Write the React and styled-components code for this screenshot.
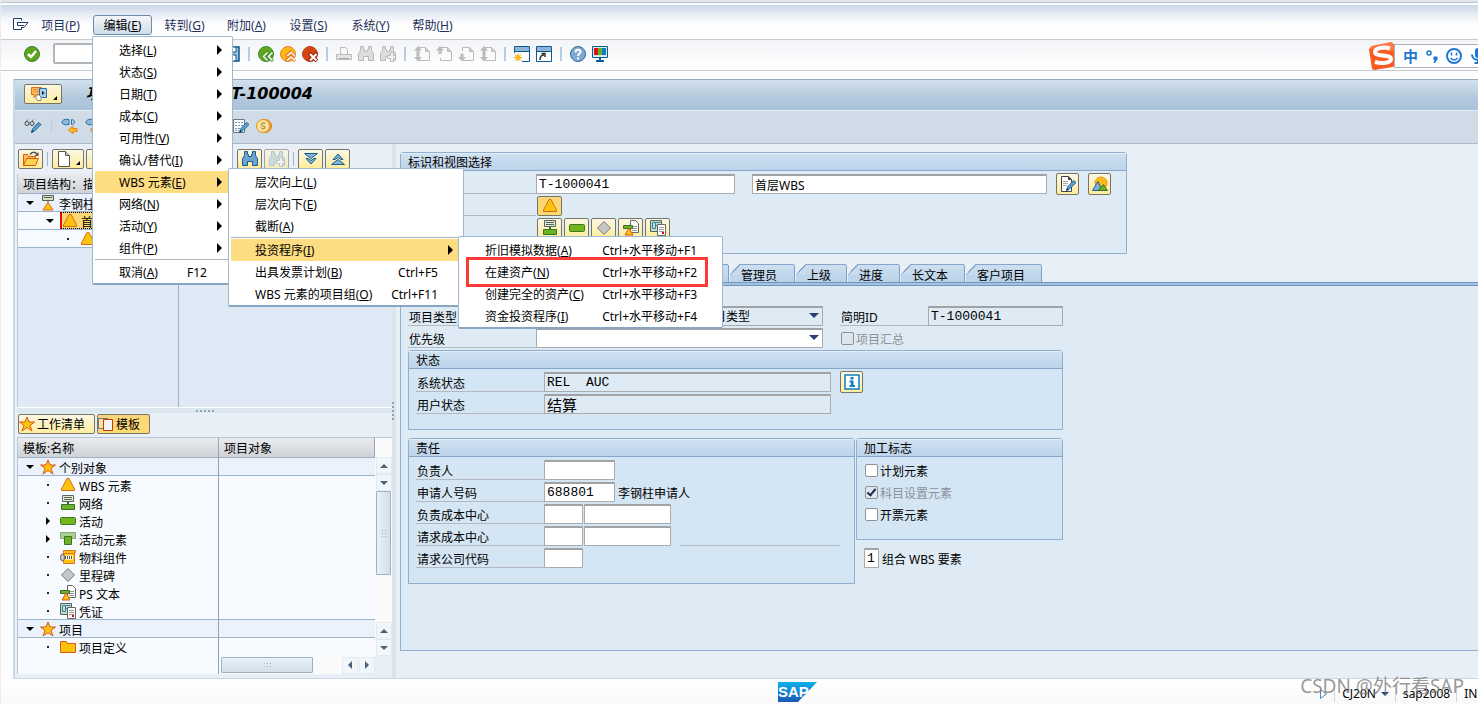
import React from 'react'
import styled, { createGlobalStyle, css } from 'styled-components'

const GlobalStyle = createGlobalStyle`
  * {
    box-sizing: border-box;
  }

  body {
    margin: 0;
    overflow: hidden;
  }

  body,
  button,
  input,
  select {
    font-family: 'Noto Sans', 'Noto Sans CJK SC', sans-serif;
    font-size: 12px;
    line-height: 18px;
    color: #000;
  }

  button {
    margin: 0;
    cursor: pointer;
  }
`

/* ---------- icons ---------- */

const Svg = styled.svg`
  display: block;
  flex: none;
`

const Icon = ({ w = 16, h = 16, children }) => (
  <Svg width={w} height={h} viewBox={`0 0 ${w} ${h}`} fill="none">
    {children}
  </Svg>
)

const ExitIcon = () => (
  <Icon>
    <path d="M8.5 3.5v-2h-8v11h8v-2" stroke="#22386e" />
    <path d="M4 5.500h11M4.500 5.500v3h4M15 5.500l-4 5M7 8.500h4M8 10.500h3" stroke="#22386e" />
  </Icon>
)

const CheckIcon = () => (
  <Icon>
    <circle cx="8" cy="8" r="7.500" fill="#5aa51c" stroke="#3c7d2c" />
    <path d="M4 8l3 3 5-6" stroke="#fff" strokeWidth="2.500" />
  </Icon>
)

const SaveIcon = () => (
  <Icon>
    <path d="M1 1h14v14H1z" fill="#9cc4e0" stroke="#0f5a8c" strokeWidth="1.500" />
    <path d="M4 1h8v5H4z" fill="#fff" stroke="#0f5a8c" />
    <path d="M4 9h8v6H4z" fill="#fff" stroke="#0f5a8c" />
  </Icon>
)

const Disc = ({ fill, stroke, children }) => (
  <Icon>
    <circle cx="8" cy="8" r="7.500" fill={fill} stroke={stroke} />
    {children}
  </Icon>
)

const BackIcon = () => (
  <Disc fill="#5fa61f" stroke="#3f8d2d">
    <path d="M10 6l-4.500 4.500L10 15M15 6l-4.500 4.500L15 15" stroke="#3f8d2d" strokeWidth="3" />
    <path d="M9.500 6.500l-4 4 4 4M14.500 6.500l-4 4 4 4" stroke="#fff" strokeWidth="1.500" />
  </Disc>
)

const UpIcon = () => (
  <Disc fill="#fdb913" stroke="#e5822a">
    <path d="M6 10.500L10.500 6l4.500 4.500M6 15l4.500-4.500L15 15" stroke="#e5722a" strokeWidth="3" />
    <path d="M7 10l4-3.500L15 10M7 14.500L11 11l4 3.500" stroke="#fff" strokeWidth="1.500" />
  </Disc>
)

const CancelIcon = () => (
  <Disc fill="#d8430f" stroke="#b5452a">
    <path d="M7 7l8 8M15 7l-8 8" stroke="#a5290f" strokeWidth="4" />
    <path d="M8 8l6.500 6.500M14.500 8L8 14.500" stroke="#fff" strokeWidth="2" />
  </Disc>
)

const PrintIcon = () => (
  <Icon>
    <path d="M4.500 8V1.500h5l2 2V8" fill="#f6f7f8" stroke="#bbb" />
    <path d="M.500 8.500h15v5H.500z" fill="#e4e4e4" stroke="#bbb" />
    <path d="M3 12.500h10" stroke="#aaa" />
  </Icon>
)

const FindIcon = ({ fill = '#ddd', stroke = '#b8b8b8', plus }) => (
  <Icon>
    <path
      d="M2.500.500h3v3h1v2h3v-2h1v-3h3v4l2 3v7h-5v-4h-5v4h-5v-7l2-3z"
      fill={fill}
      stroke={stroke}
    />
    {plus && (
      <path
        d="M10.500 6.500h3v3h2v3h-2v3h-3v-3h-3v-3h3z"
        fill="#f2f4ec"
        stroke={stroke}
      />
    )}
  </Icon>
)

const PageIcon = ({ up, down }) => (
  <Icon>
    <path d="M4.500 5V1.500h7l4 4v9h-11V12" stroke="#bbb" fill="#fafafa" />
    <path d="M11.500 1.500v4h4" fill="#ccc" stroke="#bbb" />
    {up && <path d="M4 0l4 4.500H5.500V8h-3V4.500H0z" fill="#bbb" />}
    {down && <path d="M4 15.500L0 11h2.500V7.500h3V11H8z" fill="#bbb" />}
  </Icon>
)

const SessionIcon = ({ link }) => (
  <Icon>
    <path d="M.500.500h15v15H.500z" fill="#fff" stroke="#0a5c8f" />
    <path d="M1 1h14v4H1z" fill="#8fb4dc" />
    <path d="M1 5.500h14" stroke="#0a5c8f" />
    {link ? (
      <path d="M4 14c0-3 1-5 4-5M5.500 7.500h3.500v3.500" stroke="#333" strokeWidth="1.500" />
    ) : (
      <g>
        <path d="M0 7h8v9H0z" fill="#fff" />
        <path d="M4 7.500v8M0 11.500h8M1 8.500l6 6M7 8.500l-6 6" stroke="#f28a1a" />
        <circle cx="4" cy="11.500" r="2.500" fill="#fdb913" />
      </g>
    )}
  </Icon>
)

const HelpIcon = () => (
  <Icon>
    <circle cx="8" cy="8" r="7.500" fill="#7fa9d2" stroke="#2f6c9e" />
    <path d="M5.500 6.500C5.500 3 10.500 3 10.500 6c0 1.500-2.500 1.500-2.500 4" stroke="#fff" strokeWidth="2" />
    <path d="M7 11.500h2v2H7z" fill="#fff" />
  </Icon>
)

const MonitorIcon = () => (
  <Icon>
    <path d="M.500.500h15v11H.500z" fill="#dceaf4" stroke="#0a5c8f" />
    <path d="M2 2h4v7H2z" fill="#d8130f" />
    <path d="M6 2h4v7H6z" fill="#6ab023" />
    <path d="M10 2h4v7h-4z" fill="#0d7fc4" />
    <path d="M7 12h2v2h3v2H4v-2h3z" fill="#0a5c8f" />
  </Icon>
)

const MenuFlagIcon = () => (
  <Icon w={18}>
    <path d="M1.500 1.500h10v7h-5l-2.500 3v-3h-2.500z" fill="#fdb95b" stroke="#d9711a" />
    <path d="M3.500 3.500h6M3.500 5.500h6" stroke="#d9711a" strokeDasharray="1 1" />
    <path d="M9.500 2.500h7v9h-7z" fill="#a9d0ea" stroke="#2a6f9f" />
    <path d="M12 5l2.500 2L12 9z" fill="#111" />
    <path d="M5.500 11l3-2.500 2.500 2.500v3.500h-3.500z" fill="#fff" stroke="#888" />
  </Icon>
)

const PencilPath = () => (
  <g>
    <path d="M6.500 14.500l1-3.500 6-6.500 2.500 2-6.500 6.500z" fill="#5ea3d0" stroke="#1e618f" />
    <path d="M6 15l3-1.500L7.500 12z" fill="#133f5f" />
  </g>
)

const GlassesIcon = () => (
  <Icon w={18}>
    <circle cx="3" cy="5.500" r="2" stroke="#444" />
    <circle cx="8" cy="5.500" r="2" stroke="#444" />
    <path d="M1.500 4L4 1.500M7 4l2.500-2.500" stroke="#777" />
    <g transform="translate(1 0)">
      <PencilPath />
    </g>
  </Icon>
)

const MoveIcon = ({ right }) => (
  <Icon w={17}>
    <path d="M1 3.500C3 1 5 1 8 1.500v5C5 7 3 7 1 5z" fill="#8fb9dc" stroke="#2a6f9f" />
    <path d="M10.500 1.500c4 0 4 5 0 5z" fill="#b4d2ea" stroke="#2a6f9f" />
    {right ? (
      <path d="M15 12l-5-4v2.500H6v3h4V16z" fill="#fdc04c" stroke="#e5822a" />
    ) : (
      <path d="M7.500 12l4.500-4v2.500h4v3h-4V16z" fill="#fdb913" stroke="#e5822a" />
    )}
  </Icon>
)

const SheetPencilIcon = () => (
  <Icon>
    <path d="M.500 1.500h11v13H.500z" fill="#f7fafc" stroke="#777" />
    <path d="M2 4.500h8M2 7.500h8M2 10.500h6M2 12.500h4" stroke="#8295a6" strokeDasharray="2 1" />
    <PencilPath />
  </Icon>
)

const CoinIcon = () => (
  <Icon>
    <circle cx="9" cy="8" r="6.500" fill="#f3a044" stroke="#e07f1a" />
    <circle cx="7" cy="8" r="6.500" fill="#fbe39b" stroke="#e8921c" />
    <path d="M9.500 6C8 4 5 5 5.500 7c.500 1.500 3.500.500 3.500 2.500 0 1.500-3 2-4 0" stroke="#8a6a2a" />
  </Icon>
)

const OpenIcon = () => (
  <Icon w={18}>
    <path d="M1.500 14.500v-11h4l1 2h7v3" fill="#fdc04c" stroke="#d9591a" />
    <path d="M1.500 14.500l3-7h12l-3 7z" fill="#fdd24c" stroke="#d9591a" />
    <path d="M8 3.500C10 .500 13 .500 15 3" stroke="#555" strokeWidth="1.500" />
    <path d="M16.500 1v4h-4z" fill="#555" />
  </Icon>
)

const NewIcon = () => (
  <Icon w={14}>
    <path d="M1.500.500h7l4 4v11h-11z" fill="#fff" stroke="#555" />
    <path d="M8.500.500v4h4" fill="#ccc" stroke="#555" />
  </Icon>
)

const ExpandIcon = ({ up }) => (
  <Icon>
    <g transform={up ? 'rotate(180 8 8)' : undefined}>
      <path d="M1.500 2.500h13L8 7.500z" fill="#85b3dc" stroke="#15608f" />
      <path d="M3 7.500h2l3 2 3-2h2L8 13z" fill="#85b3dc" stroke="#15608f" />
    </g>
  </Icon>
)

const WbsIcon = () => (
  <Icon>
    <path
      d="M7 1.500h2l5.500 10.500v1.500h-13V12z"
      fill="#fdc40f"
      stroke="#d9691a"
      strokeLinejoin="round"
    />
  </Icon>
)

const ProjectIcon = () => (
  <Icon>
    <path d="M2.500.500h11v5h-11z" fill="#d9e0c4" stroke="#555f55" />
    <path d="M4 2.500h8M8 6v2" stroke="#555f55" />
    <path d="M8 7.500l5 7.500H3z" fill="#fdc40f" stroke="#d9691a" strokeLinejoin="round" />
  </Icon>
)

const NetworkIcon = () => (
  <Icon>
    <path d="M2.500.500h11v6h-11z" fill="#e4ead4" stroke="#56655a" />
    <path d="M4 2.500h8M4 4.500h8" stroke="#56655a" />
    <path d="M1.500 9.500h13v5h-13z" fill="#6cb320" stroke="#39702f" />
    <path d="M7 7h2v2H7z" fill="#39702f" />
  </Icon>
)

const ActivityIcon = () => (
  <Icon>
    <rect x=".500" y="4.500" width="15" height="7" rx="1" fill="#74b51c" stroke="#3f7a2a" />
  </Icon>
)

const ElementIcon = () => (
  <Icon>
    <path d="M.500 1.500h15v6h-15z" fill="#a9d08f" stroke="#8aa77e" />
    <path d="M4.500 5.500h7v8h-7z" fill="#6cb320" stroke="#39702f" />
  </Icon>
)

const MaterialIcon = () => (
  <Icon>
    <path d="M3.500 1.500h12v2h-1v11h-11z" fill="#fdc40f" stroke="#e5722a" />
    <path d="M3 4.500h11" stroke="#e5722a" />
    <ellipse cx="2.500" cy="8.500" rx="2" ry="3.500" fill="#ccc" stroke="#666" />
    <path d="M5 8.500h8" stroke="#fff" strokeWidth="4" />
    <path d="M5 8.500h7" stroke="#555" strokeWidth="3" strokeDasharray="1 1" />
  </Icon>
)

const MilestoneIcon = () => (
  <Icon>
    <path d="M8 1.500L14.500 8 8 14.500 1.500 8z" fill="#c6c6c6" stroke="#777" />
  </Icon>
)

const PsTextIcon = () => (
  <Icon>
    <path d="M7.500.500h5l3 3v9h-8z" fill="#fff" stroke="#666" />
    <path d="M9 6.500h5M9 8.500h5M9 10.500h5" stroke="#999" />
    <path d="M.500 5.500h9v3h-9z" fill="#6cb320" stroke="#39702f" />
    <path d="M6 8l4 7H2z" fill="#fdc40f" stroke="#d9591a" strokeLinejoin="round" />
  </Icon>
)

const DocumentIcon = () => (
  <Icon>
    <path d="M.500.500h11v11h-11z" fill="#c3dfc5" stroke="#56655a" />
    <path d="M2.500 2.500h3v6h-3zM5.500 2.500h5M5.500 5.500h3" stroke="#3780a8" />
    <path d="M7.500 4.500h8v11h-8z" fill="#fff" stroke="#666" />
    <path d="M9 7.500h5M9 9.500h5M9 11.500h5" stroke="#999" />
    <path d="M12 12h2v2h-2z" fill="#e2001a" />
  </Icon>
)

const FolderIcon = () => (
  <Icon>
    <path d="M.500 2.500h6l1 2h8v9h-15z" fill="#fdc40f" stroke="#d9591a" />
  </Icon>
)

const StarIcon = () => (
  <Icon>
    <path
      d="M8 1l2 5h5.500L11 9.500l2 5.500-5-3.500L3 15l2-5.500L.500 6H6z"
      fill="#fdc40f"
      stroke="#d9591a"
    />
  </Icon>
)

const TemplateIcon = () => (
  <Icon>
    <path d="M.500 2.500h9v10h-9z" fill="#fde7a0" stroke="#777" />
    <path d="M5.500 3.500h9v11h-9z" fill="#f4f4f4" stroke="#c9340f" />
  </Icon>
)

const NoteIcon = () => (
  <Icon>
    <path d="M1.500.500h7l3 3v12h-10z" fill="#fff" stroke="#444" />
    <path d="M8.500.500v3h3" fill="#444" stroke="#444" />
    <path d="M3 5.500h5M3 7.500h5M3 9.500h4" stroke="#aaa" />
    <PencilPath />
  </Icon>
)

const HillsIcon = () => (
  <Icon>
    <circle cx="9" cy="7" r="6" fill="#fdb913" stroke="#f0941a" />
    <path d="M.500 14.500L6 5.500l4 9z" fill="#7fb3dc" stroke="#1e618f" />
    <path d="M6 14.500l5.500-6 4 6z" fill="#6cb320" stroke="#39702f" />
  </Icon>
)

const InfoIcon = () => (
  <Icon>
    <path d="M1 1h14v14H1z" fill="#fff" stroke="#0d7fc4" strokeWidth="1.500" />
    <path d="M6.500 3h3v2.500h-3zM5.500 6.500h4V11H11v2H5.500v-2H7V8.500H5.500z" fill="#0d7fc4" />
  </Icon>
)

const SogouIcon = () => (
  <Icon w={28} h={28}>
    <path d="M2 5L22 1l3 1 3 18-4 5-19 3-2-1L0 7z" fill="#fb5a20" />
    <path d="M1 7l1-3 20-4 2 1 1 8z" fill="#ff7a48" />
    <path
      d="M21 6.500C15 4.500 6 6 6 10c0 5 16 2 16 7 0 4-9 5-16 3"
      stroke="#fff"
      strokeWidth="4"
    />
  </Icon>
)

const SmileIcon = () => (
  <Icon>
    <circle cx="8" cy="8" r="7" stroke="#1f78cf" strokeWidth="2" />
    <path d="M5.500 4.500v3M10.500 4.500v3M4.500 10c2 2.500 5 2.500 7 0" stroke="#1f78cf" strokeWidth="1.500" />
  </Icon>
)

const MicIcon = () => (
  <Icon>
    <rect x="5" y="0" width="6" height="10" rx="3" fill="#1f78cf" />
    <path d="M2 6.500c0 7 12 7 12 0M8 12v4M4.500 15h7" stroke="#1f78cf" strokeWidth="2" />
  </Icon>
)

const PunctuationIcon = () => (
  <Icon w={12}>
    <circle cx="3" cy="5" r="2" stroke="#1f78cf" strokeWidth="1.500" />
    <path d="M7.500 8.500h4v3L9 15H7.500l1-3h-1z" fill="#1f78cf" />
  </Icon>
)

const SapLogo = () => (
  <Svg width="39" height="20" viewBox="0 0 39 20">
    <defs>
      <linearGradient id="sap" x1="0" y1="0" x2="0" y2="1">
        <stop offset="0" stopColor="#0fb0ec" />
        <stop offset="1" stopColor="#1a58b4" />
      </linearGradient>
    </defs>
    <path d="M0 0h39L20 20H0z" fill="url(#sap)" />
    <text
      x="0"
      y="15"
      fill="#fff"
      fontFamily="Liberation Sans, sans-serif"
      fontSize="15"
      fontWeight="700"
    >
      SAP
    </text>
  </Svg>
)

/* ---------- window ---------- */

const Window = styled.div`
  background: #fdfdfd;
  border-left: 1px solid #ececec;
  display: flex;
  flex-direction: column;
  height: 100vh;
  overflow: hidden;
  position: relative;
`

const TopEdge = styled.div`
  background: #e2e4e6;
  border-bottom: 1px solid #b4c3d6;
  flex: none;
  height: 3px;
`

const MenuBar = styled.nav`
  align-items: center;
  background: linear-gradient(#cbd6e9, #f2f5fa 40%, #fff 60%);
  border-bottom: 1px solid #c8cccf;
  border-top: 2px solid #fff;
  display: flex;
  flex: none;
  gap: 3px;
  height: 37px;
  padding: 6px 0 0 12px;
`

const MenuSlot = styled.div`
  position: relative;

  &:first-of-type {
    margin-left: -1px;
  }
`

const MenuTitle = styled.button`
  background: ${p => (p.$open ? 'linear-gradient(#f4f7fb, #cfdcea)' : 'none')};
  border: 1px solid ${p => (p.$open ? '#6f8aa8' : 'transparent')};
  border-radius: 3px;
  color: ${p => (p.$open ? '#000' : '#1d3058')};
  height: 20px;
  line-height: 16px;
  padding: 2px 0 0;
  white-space: nowrap;
  width: 59px;
`

const Menu = styled.div`
  background: #fff;
  border: 1px solid #9fb8d2;
  border-bottom: 2px solid #88a5c4;
  border-radius: 2px;
  left: ${p => p.$left};
  padding: 2px 3px 0 2px;
  position: absolute;
  top: ${p => p.$top};
  width: ${p => p.$width};
  z-index: 5;
`

const MenuEntry = styled.div`
  position: relative;
`

const MenuItem = styled.button`
  align-items: center;
  background: ${p => (p.$active ? '#fddc82' : 'none')};
  border: 0;
  display: flex;
  gap: 4px;
  height: 22px;
  justify-content: space-between;
  padding: 2px 22px 0 24px;
  white-space: nowrap;
  width: 100%;

  ${p =>
    p.$arrow &&
    css`
      padding-right: 7px;

      &::after {
        border: 5px solid transparent;
        border-left-color: #000;
        border-right: 0;
        content: '';
        margin-bottom: 3px;
      }
    `}
`

const MenuRule = styled.hr`
  border: 0;
  border-top: 1px solid #a6b2be;
  margin: 0 0 1px;
`

const Highlight = styled.div`
  border: 3px solid #fd3a3a;
  height: 30px;
  left: 7px;
  pointer-events: none;
  position: absolute;
  top: 20px;
  width: 242px;
`

const Toolbar = styled.div`
  align-items: center;
  background: linear-gradient(#f2f4f7, #fff);
  border-bottom: 1px solid #c5c9ce;
  display: flex;
  flex: none;
  gap: 6px;
  height: 31px;
  padding: 0 0 3px 23px;
`

const IconButton = styled.button`
  background: none;
  border: 0;
  flex: none;
  padding: 0;
`

const Separator = styled.span`
  background: ${p => p.$color || '#b8cbe4'};
  flex: none;
  height: 14px;
  margin: 0 2px;
  width: ${p => p.$width || 2}px;
`

const CommandField = styled.input`
  background: #fff;
  border: 2px solid #b4b6b8;
  border-radius: 2px;
  height: 21px;
  margin-left: 7px;
  padding: 0 4px;
  width: 165px;
`

const ImeBar = styled.div`
  align-items: center;
  display: flex;
  height: 28px;
  overflow: hidden;
  position: absolute;
  right: 0;
  top: 42px;
  width: 109px;
`

const ImeKeys = styled.div`
  align-items: center;
  background: #fff;
  border: 1px solid #abb0ba;
  border-right: 0;
  color: #1f78cf;
  display: flex;
  flex: none;
  font-size: 15px;
  font-weight: 700;
  gap: 8px;
  height: 24px;
  margin-left: -3px;
  padding-left: 8px;
`

const Frame = styled.div`
  background: #e8eff7;
  border-bottom: 1px solid #ccd5e2;
  border-left: 2px solid #ccd7e6;
  border-top: 1px solid #9aabc4;
  display: flex;
  flex: 1;
  flex-direction: column;
  margin: 8px 0 0 12px;
  min-height: 0;
`

const TitleBar = styled.header`
  align-items: center;
  background: linear-gradient(#d3e1ef, #bdd1df 40%, #b2c8de 60%, #a9c1da);
  border-bottom: 1px solid #e6eef5;
  display: flex;
  flex: none;
  gap: 24px;
  height: 31px;
  padding: 0 0 3px 9px;
`

const Title = styled.h1`
  font-family: 'DejaVu Sans', 'Noto Sans CJK SC', sans-serif;
  font-size: 16px;
  font-style: italic;
  font-weight: 700;
  line-height: 20px;
  margin: 0;
  white-space: pre;
`

const TitleText = styled.span`
  display: inline-block;
  width: 145px;
`

const AppToolbar = styled.div`
  align-items: center;
  background: #cfdce7;
  border-bottom: 1px solid #a9b9c9;
  display: flex;
  flex: none;
  gap: 7px;
  height: 33px;
  padding: 0 0 3px 9px;
`

const Grow = styled.span`
  flex: none;
  width: ${p => p.$width}px;
`

const SapButton = styled.button`
  align-items: center;
  background: ${p =>
    p.$pressed
      ? 'linear-gradient(#fbd57a, #fddb70)'
      : 'linear-gradient(#fbf7e4, #ffec9c)'};
  border: 1px solid #77756a;
  border-radius: 2px;
  display: flex;
  flex: none;
  gap: 2px;
  height: ${p => p.$height || 20}px;
  justify-content: center;
  opacity: ${p => (p.$dim ? 0.6 : 1)};
  padding: ${p => (p.$text ? '0 9px 0 0' : '0')};
  white-space: nowrap;
  width: ${p => (p.$width ? `${p.$width}px` : 'auto')};

  span {
    padding-top: ${p => (p.$text ? 2 : 0)}px;
  }
`

const Corner = styled.span`
  align-self: flex-end;
  border: 2px solid #000;
  border-left-color: transparent;
  border-top-color: transparent;
  margin: 0 0 3px 3px;
`

const Main = styled.main`
  display: flex;
  flex: 1;
  min-height: 0;
`

/* ---------- navigation pane ---------- */

const Pane = styled.aside`
  display: flex;
  flex: none;
  flex-direction: column;
  padding: 0 0 4px 2px;
  width: 377px;
`

const ToolStrip = styled.div`
  align-items: center;
  display: flex;
  flex: none;
  gap: 2px;
  padding: 5px 0 0 1px;
`

const ViewBar = styled.div`
  display: flex;
  flex: none;
  gap: 2px;
  padding: 1px 0 0 1px;
`

const TreeArea = styled.div`
  background: linear-gradient(#9fb2c8, #9fb2c8) 160px 0 / 1px 100% no-repeat
    #e0eaf6;
  border-left: 1px solid #b7c6d6;
  flex: 1;
  margin-top: 5px;
  min-height: 0;
`

const Table = styled.table`
  border-collapse: separate;
  border-spacing: 0;
  table-layout: fixed;
  width: 100%;
`

const HeadCell = styled.th`
  background: linear-gradient(#e9ebee, #cfd3d8);
  border-bottom: 1px solid #9db0c8;
  border-right: 1px solid #9aa6b2;
  font-weight: 400;
  height: 19px;
  line-height: 16px;
  overflow: hidden;
  padding: 3px 0 0 5px;
  text-align: left;
  white-space: nowrap;
  width: ${p => p.$width};
`

const Cell = styled.td`
  background: ${p => (p.$group ? '#ebf2fb' : '#f7fafe')};
  border-bottom: ${p => (p.$line ? '1px solid #9db4cd' : '0')};
  border-right: ${p => (p.$last ? '0' : '1px solid #8ea3ba')};
  height: 18px;
  overflow: hidden;
  padding: 0;
  vertical-align: top;
`

const Node = styled.div`
  align-items: center;
  display: flex;
  height: 17px;
  line-height: 17px;
  padding-left: ${p => 6 + p.$level * 20}px;
  white-space: nowrap;
`

const NodeLabel = styled.span`
  align-items: center;
  display: flex;
  gap: 3px;

  span {
    padding-top: 3px;
  }

  ${p =>
    p.$selected &&
    css`
      background: #fcd778;
      border: 1px dotted #000;
      border-left: 2px solid #f00;
      height: 17px;
      padding-right: 60px;
    `}
`

const Marker = styled.span`
  flex: none;
  width: 16px;

  &::before {
    content: '';
    display: block;
    margin-left: 2px;

    ${p =>
      p.$kind === 'open' &&
      css`
        border: 4px solid transparent;
        border-bottom: 0;
        border-top-color: #000;
        width: 0;
      `}

    ${p =>
      p.$kind === 'closed' &&
      css`
        border: 4px solid transparent;
        border-left-color: #000;
        border-right: 0;
        width: 0;
      `}

    ${p =>
      p.$kind === 'leaf' &&
      css`
        background: #222;
        height: 2px;
        margin-left: 3px;
        width: 2px;
      `}
  }
`

const Splitter = styled.div`
  align-items: center;
  background: #dde7ef;
  border-top: 1px solid #fff;
  display: flex;
  flex: none;
  height: 6px;
  justify-content: center;

  &::after {
    border-top: 2px dotted #8fa3b8;
    content: '';
    width: 18px;
  }
`

const VerticalSplitter = styled.div`
  align-items: center;
  background: #dbe5ec;
  display: flex;
  flex: none;
  width: 4px;

  &::after {
    border-left: 2px dotted #8fa3b8;
    content: '';
    height: 18px;
  }
`

const TemplateArea = styled.div`
  border-left: 1px solid #b7c6d6;
  border-top: 1px solid #b7c6d6;
  display: grid;
  flex: none;
  grid-template-columns: 357px 17px;
  grid-template-rows: auto 18px;
  margin-top: 3px;
`

const ScrollColumn = styled.div`
  background: #fafafa;
  display: flex;
  flex-direction: column;
  padding: 19px 0 0 1px;
`

const ScrollButton = styled.button`
  align-items: center;
  background: #f1f6fa;
  border: 1px solid #e3eaf0;
  display: flex;
  flex: none;
  height: 17px;
  justify-content: center;
  padding: 0;
  width: 16px;

  &::after {
    border: 4px solid transparent;
    content: '';
    ${p => p.$dir === 'up' && 'border-top: 0; border-bottom-color: #48617a;'}
    ${p => p.$dir === 'down' && 'border-bottom: 0; border-top-color: #48617a;'}
    ${p => p.$dir === 'left' && 'border-left: 0; border-right-color: #48617a;'}
    ${p => p.$dir === 'right' && 'border-right: 0; border-left-color: #48617a;'}
  }
`

const Thumb = styled.div`
  align-items: center;
  background: linear-gradient(
    ${p => (p.$vertical ? '90deg' : '180deg')},
    #e9f1f8,
    #d2dfe9
  );
  border: 1px solid #9fb2c4;
  border-radius: 1px;
  display: flex;
  flex: none;
  height: ${p => (p.$vertical ? '84px' : '16px')};
  justify-content: center;
  width: ${p => (p.$vertical ? '15px' : '92px')};

  &::after {
    background: radial-gradient(#9fb2c4 1px, transparent 1px) 0 0 / 3px 3px;
    content: '';
    height: ${p => (p.$vertical ? '9px' : '6px')};
    width: ${p => (p.$vertical ? '6px' : '9px')};
  }
`

const ScrollTrack = styled.div`
  flex: 1;
`

const ScrollRow = styled.div`
  align-items: center;
  background: linear-gradient(90deg, #f7fafe 200px, #8ea3ba 200px, #8ea3ba 201px, #fafafa 201px);
  display: flex;
  gap: 1px;
  padding-left: 203px;
`

/* ---------- detail area ---------- */

const Detail = styled.section`
  display: flex;
  flex: 1;
  flex-direction: column;
  min-width: 0;
  padding: 8px 0 27px 4px;
`

const Group = styled.section`
  background: ${p => p.$bg || '#d4e5f3'};
  border: 1px solid #8fafd0;
  border-radius: 3px 3px 0 0;
  height: ${p => p.$height}px;
  width: ${p => p.$width}px;
`

const GroupTitle = styled.h2`
  background: linear-gradient(#d0e0f0, #bcd3ea);
  border-bottom: 1px solid #86a7cb;
  border-top: 1px solid #e4eef8;
  font-size: 12px;
  font-weight: 400;
  height: 18px;
  line-height: 17px;
  margin: 0 0 3px;
  padding-left: 7px;
`

const Row = styled.div`
  align-items: center;
  display: flex;
  gap: ${p => p.$gap || 0}px;
  height: 20px;
  margin-bottom: 2px;
  padding-left: ${p => p.$indent || 0}px;
`

const Label = styled.label`
  align-self: stretch;
  border-bottom: 1px solid #b3b9bf;
  flex: none;
  line-height: 22px;
  padding: 1px 0 0 1px;
  white-space: nowrap;
  width: ${p => p.$width || 128}px;
`

const Text = styled.span`
  padding: 3px 0 0 3px;
  white-space: nowrap;
`

const Rule = styled.span`
  align-self: flex-end;
  border-bottom: 1px solid #b3b9bf;
  margin-left: 9px;
  width: 160px;
`

const fieldStyle = css`
  background: ${p => (p.$locked ? '#dfebf4' : '#fff')};
  border: 1px solid #a9abad;
  border-radius: 1px;
  border-top: 2px solid #a0a2a4;
  flex: none;
  height: 20px;
  margin: 0;
  padding: 0 2px;
  width: ${p => p.$width}px;
`

const Field = styled.input`
  ${fieldStyle}
  font-family: ${p =>
    p.$ui
      ? "'Noto Sans', 'Noto Sans CJK SC', sans-serif"
      : "'Liberation Mono', 'Noto Sans CJK SC', monospace"};
  font-size: ${p => (p.$ui ? 12 : p.$large ? 15 : 13)}px;
`

const SelectBox = styled.span`
  flex: none;
  position: relative;

  &::after {
    border: 5px solid transparent;
    border-bottom: 0;
    border-top-color: #26406f;
    content: '';
    pointer-events: none;
    position: absolute;
    right: 4px;
    top: 7px;
  }
`

const Select = styled.select`
  ${fieldStyle}
  appearance: none;
  display: block;
  padding-left: ${p => p.$indent || 2}px;
`

const Check = styled.label`
  align-items: center;
  color: ${p => (p.$muted ? '#8a9299' : '#000')};
  display: flex;
  gap: 2px;
  white-space: nowrap;

  span {
    padding-top: 3px;
  }
`

const CheckBox = styled.input`
  appearance: none;
  background: ${p => (p.disabled ? '#dbe6ef' : '#fff')};
  border: 1px solid #8f9193;
  border-radius: 2px;
  flex: none;
  height: 13px;
  margin: 0;
  width: 13px;

  &:checked::after {
    border: solid #1f2e52;
    border-width: 0 2px 2px 0;
    box-sizing: border-box;
    content: '';
    display: block;
    height: 9px;
    margin-left: 3px;
    transform: rotate(40deg);
    width: 5px;
  }
`

const TabList = styled.div`
  display: flex;
  flex: none;
  height: 28px;
  padding-top: 10px;
`

const Tab = styled.button`
  background: linear-gradient(#cfe0f0, #b9d1e9) 10px 0 no-repeat;
  border: 0;
  border-right: 1px solid #7f9fc4;
  border-radius: 0 3px 0 0;
  display: flex;
  height: 18px;
  line-height: 18px;
  margin-right: 1px;
  padding: 0;
  text-align: left;
  white-space: nowrap;
  width: ${p => p.$width}px;

  &::before {
    background: linear-gradient(
          to bottom right,
          transparent 46%,
          #86a7cb 47%,
          #86a7cb 54%,
          #c9dcee 55%
        )
        0 0 / 10px 11px no-repeat,
      linear-gradient(#bfd5eb, #bfd5eb) 0 11px no-repeat;
    content: '';
    flex: none;
    height: 18px;
    width: 10px;
  }

  span {
    border-top: 1px solid #86a7cb;
    flex: 1;
    height: 18px;
    line-height: 22px;
    padding-left: 1px;
  }
`

const TabPage = styled.div`
  background: #dfebf4;
  border-bottom: 1px solid #8fb3d6;
  border-left: 1px solid #8fb3d6;
  flex: 1;
  min-height: 0;
  padding: 20px 0 0 7px;
`

const TabLine = styled.div`
  background: #a6c1e0;
  border-bottom: 1px solid #7097c3;
  border-top: 1px solid #7097c3;
  flex: none;
  height: 4px;
`

const Columns = styled.div`
  align-items: flex-start;
  display: flex;
  gap: 1px;
  margin-top: 8px;
`

const StatusBar = styled.footer`
  align-items: center;
  background: linear-gradient(#fff, #f9f9f9);
  display: flex;
  flex: none;
  height: 25px;
  justify-content: space-between;
  overflow: hidden;
  padding-left: 52.600%;
`

const StatusItems = styled.div`
  align-items: center;
  display: flex;
  flex: none;
  gap: 6px;
  line-height: 16px;
  margin-right: -6px;
  padding-top: 4px;

  & > * + * {
    border-left: 1px solid #d3d7dc;
    padding-left: 7px;
  }
`

const StatusItem = styled.span`
  align-items: center;
  display: flex;
  gap: 5px;
`

const Down = styled.span`
  border: 4px solid transparent;
  border-bottom: 0;
  border-top-color: #26406f;
`

const Watermark = styled.div`
  bottom: 6px;
  color: rgba(120, 120, 120, 0.75);
  font-size: 19px;
  line-height: 24px;
  position: absolute;
  right: 14px;
  white-space: nowrap;
`

/* ---------- data ---------- */

const menuTitles = [
  ['项目', 'P'],
  ['编辑', 'E'],
  ['转到', 'G'],
  ['附加', 'A'],
  ['设置', 'S'],
  ['系统', 'Y'],
  ['帮助', 'H'],
]

const editMenu = [
  ['选择', 'L'],
  ['状态', 'S'],
  ['日期', 'T'],
  ['成本', 'C'],
  ['可用性', 'V'],
  ['确认/替代', 'I'],
  ['WBS 元素', 'E'],
  ['网络', 'N'],
  ['活动', 'Y'],
  ['组件', 'P'],
]

const investMenu = [
  ['折旧模拟数据', 'A', 'F1'],
  ['在建资产', 'N', 'F2'],
  ['创建完全的资产', 'C', 'F3'],
  ['资金投资程序', 'I', 'F4'],
]

const templates = [
  { text: '个别对象', icon: <StarIcon />, kind: 'open', level: 0, line: true },
  { text: 'WBS 元素', icon: <WbsIcon />, kind: 'leaf', level: 1 },
  { text: '网络', icon: <NetworkIcon />, kind: 'leaf', level: 1 },
  { text: '活动', icon: <ActivityIcon />, kind: 'closed', level: 1 },
  { text: '活动元素', icon: <ElementIcon />, kind: 'closed', level: 1 },
  { text: '物料组件', icon: <MaterialIcon />, kind: 'leaf', level: 1 },
  { text: '里程碑', icon: <MilestoneIcon />, kind: 'leaf', level: 1 },
  { text: 'PS 文本', icon: <PsTextIcon />, kind: 'leaf', level: 1 },
  { text: '凭证', icon: <DocumentIcon />, kind: 'leaf', level: 1, line: true },
  { text: '项目', icon: <StarIcon />, kind: 'open', level: 0, line: true },
  { text: '项目定义', icon: <FolderIcon />, kind: 'leaf', level: 1 },
]

const projectTree = [
  { text: '李钢柱', icon: <ProjectIcon />, kind: 'open', level: 0, line: true },
  { text: '首层WBS', icon: <WbsIcon />, kind: 'open', level: 1, line: true, selected: true },
  { text: '', icon: <WbsIcon />, kind: 'leaf', level: 2, line: true },
]

const tabs = [
  ['', 329],
  ['管理员', 65],
  ['上级', 51],
  ['进度', 52],
  ['长文本', 64],
  ['客户项目', 76],
]

/* ---------- parts ---------- */

const Caption = ({ text, hotkey }) => (
  <span>
    {text}(<u>{hotkey}</u>)
  </span>
)

const InvestMenu = () => (
  <Menu $left="227px" $top="-3px" $width="265px">
    {investMenu.map(([text, hotkey, key]) => (
      <MenuItem key={key}>
        <Caption text={text} hotkey={hotkey} />
        <span>Ctrl+水平移动+{key}</span>
      </MenuItem>
    ))}
    <Highlight />
  </Menu>
)

const WbsMenu = () => (
  <Menu $left="133px" $top="-3px" $width="236px">
    <MenuItem>
      <Caption text="层次向上" hotkey="L" />
    </MenuItem>
    <MenuItem>
      <Caption text="层次向下" hotkey="E" />
    </MenuItem>
    <MenuItem>
      <Caption text="截断" hotkey="A" />
    </MenuItem>
    <MenuRule />
    <MenuEntry>
      <MenuItem $active $arrow>
        <Caption text="投资程序" hotkey="I" />
      </MenuItem>
      <InvestMenu />
    </MenuEntry>
    <MenuItem>
      <Caption text="出具发票计划" hotkey="B" />
      <span>Ctrl+F5</span>
    </MenuItem>
    <MenuItem>
      <Caption text="WBS 元素的项目组" hotkey="O" />
      <span>Ctrl+F11</span>
    </MenuItem>
  </Menu>
)

const EditMenu = () => (
  <Menu $left="-1px" $top="21px" $width="141px">
    {editMenu.map(([text, hotkey]) => (
      <MenuEntry key={text}>
        <MenuItem $arrow $active={hotkey === 'E'}>
          <Caption text={text} hotkey={hotkey} />
        </MenuItem>
        {hotkey === 'E' && <WbsMenu />}
      </MenuEntry>
    ))}
    <MenuRule />
    <MenuItem>
      <Caption text="取消" hotkey="A" />
      <span>F12</span>
    </MenuItem>
  </Menu>
)

const TreeRow = ({ node }) => (
  <tr>
    <Cell $group={node.level === 0} $line={node.line}>
      <Node $level={node.level}>
        <Marker $kind={node.kind} />
        <NodeLabel $selected={node.selected}>
          {node.icon}
          <span>{node.text}</span>
        </NodeLabel>
      </Node>
    </Cell>
    <Cell $group={node.level === 0} $line={node.line} $last />
  </tr>
)

const TreeTools = () => (
  <ToolStrip>
    <SapButton $width={25} aria-label="打开">
      <OpenIcon />
    </SapButton>
    <Separator $width={1} $color="#a9b3bd" />
    <SapButton $width={32} aria-label="创建">
      <NewIcon />
      <Corner />
    </SapButton>
    <SapButton $width={25} aria-label="显示" />
    <Grow $width={122} />
    <SapButton $width={25} aria-label="查找">
      <FindIcon fill="#6fa3cf" stroke="#15608f" />
    </SapButton>
    <SapButton $width={25} $dim aria-label="继续查找">
      <FindIcon fill="#b9cfc4" stroke="#9aaea4" plus />
    </SapButton>
    <Separator $width={1} $color="#a9b3bd" />
    <SapButton $width={25} aria-label="展开">
      <ExpandIcon />
    </SapButton>
    <SapButton $width={25} aria-label="折叠">
      <ExpandIcon up />
    </SapButton>
  </ToolStrip>
)

const Navigator = () => (
  <Pane>
    <TreeTools />
    <TreeArea>
      <Table>
        <thead>
          <tr>
            <HeadCell $width="161px">项目结构：描</HeadCell>
            <HeadCell />
          </tr>
        </thead>
        <tbody>
          {projectTree.map(node => (
            <TreeRow key={node.text} node={node} />
          ))}
        </tbody>
      </Table>
    </TreeArea>
    <Splitter />
    <ViewBar>
      <SapButton $text>
        <StarIcon />
        <span>工作清单</span>
      </SapButton>
      <SapButton $text $pressed>
        <TemplateIcon />
        <span>模板</span>
      </SapButton>
    </ViewBar>
    <TemplateArea>
      <Table>
        <thead>
          <tr>
            <HeadCell $width="201px">模板:名称</HeadCell>
            <HeadCell>项目对象</HeadCell>
          </tr>
        </thead>
        <tbody>
          {templates.map(node => (
            <TreeRow key={node.text} node={node} />
          ))}
        </tbody>
      </Table>
      <ScrollColumn>
        <ScrollButton $dir="up" aria-label="上移" />
        <ScrollButton $dir="down" aria-label="下移" />
        <Thumb $vertical />
        <ScrollTrack />
        <ScrollButton $dir="up" aria-label="上移" />
        <ScrollButton $dir="down" aria-label="下移" />
      </ScrollColumn>
      <ScrollRow>
        <Thumb />
        <ScrollTrack />
        <ScrollButton $dir="left" aria-label="左移" />
        <ScrollButton $dir="right" aria-label="右移" />
      </ScrollRow>
    </TemplateArea>
  </Pane>
)

const Identification = () => (
  <Group $width={727} $height={102} $bg="#deebf4">
    <GroupTitle>标识和视图选择</GroupTitle>
    <Row>
      <Label $width={135} />
      <Field $width={199} defaultValue="T-1000041" aria-label="WBS 元素" />
      <Grow $width={17} />
      <Field $ui $width={295} defaultValue="首层WBS" aria-label="描述" />
      <Grow $width={9} />
      <SapButton $width={23} $height={22} aria-label="长文本">
        <NoteIcon />
      </SapButton>
      <Grow $width={9} />
      <SapButton $width={23} $height={22} aria-label="概览">
        <HillsIcon />
      </SapButton>
    </Row>
    <Row>
      <Label $width={135} />
      <Grow $width={1} />
      <SapButton $width={25} $pressed aria-label="WBS 元素">
        <WbsIcon />
      </SapButton>
    </Row>
    <Row $gap={2}>
      <Grow $width={134} />
      {[NetworkIcon, ActivityIcon, MilestoneIcon, PsTextIcon, DocumentIcon].map(
        (Glyph, i) => (
          <SapButton key={i} $width={25}>
            <Glyph />
          </SapButton>
        )
      )}
    </Row>
  </Group>
)

const BasicData = () => (
  <TabPage>
    <Row>
      <Label htmlFor="type">项目类型</Label>
      <SelectBox>
        <Select id="type" $width={287} $locked $indent={165}>
          <option>项目类型</option>
        </Select>
      </SelectBox>
      <Grow $width={17} />
      <Label htmlFor="short" $width={88}>
        简明ID
      </Label>
      <Field id="short" $width={135} $locked readOnly defaultValue="T-1000041" />
    </Row>
    <Row>
      <Label htmlFor="priority">优先级</Label>
      <SelectBox>
        <Select id="priority" $width={287}>
          <option />
        </Select>
      </SelectBox>
      <Grow $width={18} />
      <Check $muted>
        <CheckBox type="checkbox" disabled />
        <span>项目汇总</span>
      </Check>
    </Row>
    <Group $width={655} $height={80}>
      <GroupTitle>状态</GroupTitle>
      <Row $indent={7}>
        <Label htmlFor="system">系统状态</Label>
        <Field id="system" $width={287} $locked readOnly defaultValue="REL  AUC" />
        <Grow $width={9} />
        <SapButton $width={23} $height={22} aria-label="状态信息">
          <InfoIcon />
        </SapButton>
      </Row>
      <Row $indent={7}>
        <Label htmlFor="user">用户状态</Label>
        <Field id="user" $width={287} $locked $large readOnly defaultValue="结算" />
      </Row>
    </Group>
    <Columns>
      <Group $width={447} $height={146}>
        <GroupTitle>责任</GroupTitle>
        <Row $indent={7}>
          <Label htmlFor="owner">负责人</Label>
          <Field id="owner" $width={71} />
        </Row>
        <Row $indent={7}>
          <Label htmlFor="applicant">申请人号码</Label>
          <Field id="applicant" $width={71} defaultValue="688801" />
          <Text>李钢柱申请人</Text>
        </Row>
        <Row $indent={7}>
          <Label htmlFor="cost">负责成本中心</Label>
          <Field id="cost" $width={39} />
          <Grow $width={1} />
          <Field $width={87} aria-label="成本中心" />
        </Row>
        <Row $indent={7}>
          <Label htmlFor="request">请求成本中心</Label>
          <Field id="request" $width={39} />
          <Grow $width={1} />
          <Field $width={87} aria-label="成本中心" />
          <Rule />
        </Row>
        <Row $indent={7}>
          <Label htmlFor="company">请求公司代码</Label>
          <Field id="company" $width={39} />
        </Row>
      </Group>
      <div>
        <Group $width={207} $height={102}>
          <GroupTitle>加工标志</GroupTitle>
          <Row $indent={8}>
            <Check>
              <CheckBox type="checkbox" />
              <span>计划元素</span>
            </Check>
          </Row>
          <Row $indent={8}>
            <Check $muted>
              <CheckBox type="checkbox" disabled defaultChecked />
              <span>科目设置元素</span>
            </Check>
          </Row>
          <Row $indent={8}>
            <Check>
              <CheckBox type="checkbox" />
              <span>开票元素</span>
            </Check>
          </Row>
        </Group>
        <Columns>
          <Row $indent={8}>
            <Field id="grouping" $width={15} defaultValue="1" />
            <Text as="label" htmlFor="grouping">
              组合 WBS 要素
            </Text>
          </Row>
        </Columns>
      </div>
    </Columns>
  </TabPage>
)

export default () => {
  return (
    <Window>
      <GlobalStyle />
      <TopEdge />
      <MenuBar>
        <ExitIcon />
        {menuTitles.map(([text, hotkey]) => (
          <MenuSlot key={hotkey}>
            <MenuTitle $open={hotkey === 'E'}>
              <Caption text={text} hotkey={hotkey} />
            </MenuTitle>
            {hotkey === 'E' && <EditMenu />}
          </MenuSlot>
        ))}
      </MenuBar>
      <Toolbar>
        <IconButton aria-label="回车">
          <CheckIcon />
        </IconButton>
        <CommandField aria-label="命令" />
        <IconButton aria-label="保存">
          <SaveIcon />
        </IconButton>
        <Separator />
        <IconButton aria-label="返回">
          <BackIcon />
        </IconButton>
        <IconButton aria-label="退出">
          <UpIcon />
        </IconButton>
        <IconButton aria-label="取消">
          <CancelIcon />
        </IconButton>
        <Separator />
        <IconButton aria-label="打印">
          <PrintIcon />
        </IconButton>
        <IconButton aria-label="查找">
          <FindIcon />
        </IconButton>
        <IconButton aria-label="继续查找">
          <FindIcon plus />
        </IconButton>
        <Separator />
        <IconButton aria-label="第一页">
          <PageIcon up down />
        </IconButton>
        <IconButton aria-label="上一页">
          <PageIcon up />
        </IconButton>
        <IconButton aria-label="下一页">
          <PageIcon down />
        </IconButton>
        <IconButton aria-label="最后一页">
          <PageIcon up down />
        </IconButton>
        <Separator />
        <IconButton aria-label="新建会话">
          <SessionIcon />
        </IconButton>
        <IconButton aria-label="快捷方式">
          <SessionIcon link />
        </IconButton>
        <Separator />
        <IconButton aria-label="帮助">
          <HelpIcon />
        </IconButton>
        <IconButton aria-label="本地布局">
          <MonitorIcon />
        </IconButton>
      </Toolbar>
      <ImeBar>
        <SogouIcon />
        <ImeKeys>
          中
          <PunctuationIcon />
          <SmileIcon />
          <MicIcon />
        </ImeKeys>
      </ImeBar>
      <Frame>
        <TitleBar>
          <SapButton $width={38} aria-label="菜单">
            <MenuFlagIcon />
            <Corner />
          </SapButton>
          <Title>
            <TitleText>项</TitleText>T-100004
          </Title>
        </TitleBar>
        <AppToolbar>
          <IconButton aria-label="显示/更改">
            <GlassesIcon />
          </IconButton>
          <Separator $width={1} />
          <IconButton aria-label="上一个">
            <MoveIcon />
          </IconButton>
          <IconButton aria-label="下一个">
            <MoveIcon right />
          </IconButton>
          <Grow $width={117} />
          <IconButton aria-label="批量更改">
            <SheetPencilIcon />
          </IconButton>
          <IconButton aria-label="成本核算">
            <CoinIcon />
          </IconButton>
        </AppToolbar>
        <Main>
          <Navigator />
          <VerticalSplitter />
          <Detail>
            <Identification />
            <TabList>
              {tabs.map(([text, width]) => (
                <Tab key={text} $width={width}>
                  <span>{text}</span>
                </Tab>
              ))}
            </TabList>
            <TabLine />
            <BasicData />
          </Detail>
        </Main>
      </Frame>
      <StatusBar>
        <SapLogo />
        <StatusItems>
          <Svg width="9" height="12" viewBox="0 0 9 12" fill="none">
            <path d="M1.500 1.500v9l6-4.500z" stroke="#4a86b8" />
          </Svg>
          <StatusItem>
            CJ20N <Down />
          </StatusItem>
          <span>sap2008</span>
          <span>INS</span>
        </StatusItems>
      </StatusBar>
      <Watermark>CSDN @外行看SAP</Watermark>
    </Window>
  )
}
